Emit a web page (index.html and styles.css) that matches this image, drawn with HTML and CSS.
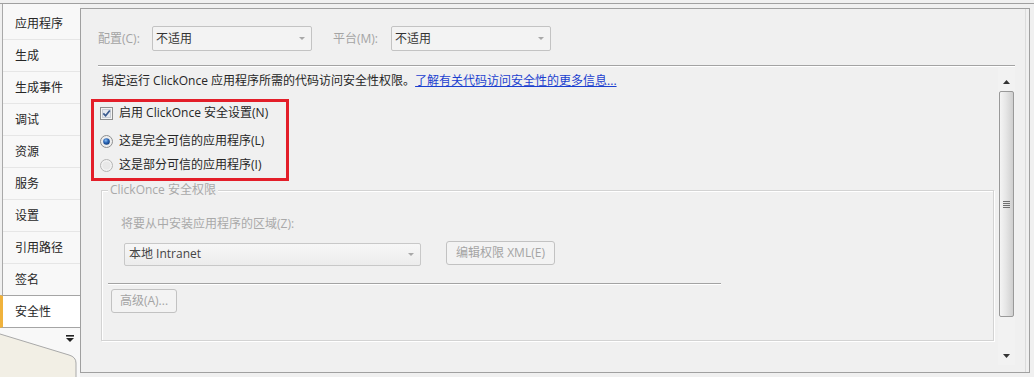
FILE: index.html
```html
<!DOCTYPE html>
<html lang="zh-CN">
<head>
    <meta charset="UTF-8">
    <title>安全性</title>
    <link rel="stylesheet" href="styles.css">
</head>
<body>
    <div class="window">
        <div class="sidebar">
            <ul class="tabs">
                <li class="tab">应用程序</li>
                <li class="tab">生成</li>
                <li class="tab">生成事件</li>
                <li class="tab">调试</li>
                <li class="tab">资源</li>
                <li class="tab">服务</li>
                <li class="tab">设置</li>
                <li class="tab">引用路径</li>
                <li class="tab">签名</li>
                <li class="tab active">安全性</li>
            </ul>
            <div class="sidebar-foot">
                <svg width="80" height="49" viewBox="0 0 80 49">
                    <path d="M0 0 H80 V49 H0 Z" fill="#f0f0f0"/>
                    <path d="M3 0 H80 V49 H76 V35 Q76 29 69 27 L0 6 V0 Z" fill="#f8f8f8"/>
                    <path d="M0 6 L69 27 Q76 29 76 35 V49 H0 Z" fill="#f2efe5"/>
                    <path d="M0 6 L69 27 Q76 29 76 35 V49" fill="none" stroke="#a9a9a9" stroke-width="1"/>
                    <rect x="66" y="7" width="8" height="1.6" fill="#222"/>
                    <path d="M66 10 H74 L70 14 Z" fill="#222"/>
                </svg>
            </div>
        </div>

        <div class="panel">
            <div class="config-row">
                <span class="muted config">配置(C):</span>
                <div class="combo small"><span>不适用</span><i class="caret"></i></div>
                <span class="muted platform">平台(M):</span>
                <div class="combo small"><span>不适用</span><i class="caret"></i></div>
            </div>
            <div class="rule"></div>

            <div class="scroll-area">
                <div class="scroll-content">
                    <p class="intro">指定运行 ClickOnce 应用程序所需的代码访问安全性权限。<a href="#">了解有关代码访问安全性的更多信息...</a></p>

                    <div class="highlight">
                        <label class="option first">
                            <svg class="mark" width="13" height="13" viewBox="0 0 13 13">
                                <rect x="0.5" y="0.5" width="12" height="12" fill="#f4f4f4" stroke="#8e8f8f"/>
                                <rect x="2.5" y="2.5" width="8" height="8" fill="#e6e9ef" stroke="#c9ced6"/>
                                <path d="M3.3 6.4 L5.6 8.8 L9.8 3.4" fill="none" stroke="#3a5a8e" stroke-width="1.7"/>
                            </svg>
                            启用 ClickOnce 安全设置(N)
                        </label>
                        <label class="option second">
                            <svg class="mark" width="13" height="13" viewBox="0 0 13 13">
                                <defs>
                                    <radialGradient id="dot" cx="0.4" cy="0.35" r="0.7">
                                        <stop offset="0" stop-color="#8cc0f2"/>
                                        <stop offset="0.5" stop-color="#2a65b6"/>
                                        <stop offset="1" stop-color="#133b74"/>
                                    </radialGradient>
                                </defs>
                                <circle cx="6.5" cy="6.5" r="6" fill="#eeeeee" stroke="#8e8f8f"/>
                                <circle cx="6.5" cy="6.5" r="3.3" fill="url(#dot)"/>
                            </svg>
                            这是完全可信的应用程序(L)
                        </label>
                        <label class="option third">
                            <svg class="mark" width="13" height="13" viewBox="0 0 13 13">
                                <circle cx="6.5" cy="6.5" r="6" fill="#f2f2f2" stroke="#b4b4b4"/>
                                <circle cx="6.5" cy="6.5" r="4" fill="#e8e8e8"/>
                            </svg>
                            这是部分可信的应用程序(I)
                        </label>
                    </div>

                    <div class="group">
                        <span class="group-title">ClickOnce 安全权限</span>
                        <p class="zone-label">将要从中安装应用程序的区域(Z):</p>
                        <div class="zone-row">
                            <div class="combo zone"><span>本地 Intranet</span><i class="caret"></i></div>
                            <button class="btn xml-btn">编辑权限 XML(E)</button>
                        </div>
                        <div class="rule inner-rule"></div>
                        <button class="btn adv-btn">高级(A)...</button>
                    </div>
                </div>

                <div class="scrollbar">
                    <div class="sb-btn">
                        <svg width="7" height="4" viewBox="0 0 7 4"><path d="M0 4 L3.5 0 L7 4 Z" fill="#333"/></svg>
                    </div>
                    <div class="sb-thumb">
                        <span></span><span></span><span></span><span></span>
                    </div>
                    <div class="sb-track"></div>
                    <div class="sb-btn">
                        <svg width="7" height="4" viewBox="0 0 7 4"><path d="M0 0 L7 0 L3.5 4 Z" fill="#333"/></svg>
                    </div>
                </div>
            </div>
        </div>
    </div>
</body>
</html>
```

FILE: styles.css
```css
* {
    margin: 0;
    padding: 0;
    box-sizing: border-box;
}

body {
    width: 1034px;
    height: 377px;
    overflow: hidden;
    background: #f0f0f0;
    font-family: "Open Sans", "Noto Sans CJK SC", sans-serif;
    font-size: 12px;
    line-height: 16px;
    color: #262626;
}

.window {
    margin-top: 3px;
    height: 374px;
    border-top: 1px solid #a0a0a0;
    display: flex;
}

/* левая колонка вкладок */
.sidebar {
    width: 80px;
    display: flex;
    flex-direction: column;
}

.tabs {
    list-style: none;
    margin-left: 2px;
    padding-top: 4px;
    border-left: 1px solid #a9a9a9;
    background: #f8f8f8;
}

.tab {
    height: 32px;
    line-height: 31px;
    padding-left: 12px;
    border-bottom: 1px solid #e6e6e6;
}

.tab.active {
    margin-top: -1px;
    margin-left: -3px;
    height: 33px;
    border-left: 3px solid #f0b23c;
    border-top: 1px solid #a5a5a5;
    border-bottom: 1px solid #a5a5a5;
    background: #ffffff;
}

.sidebar-foot {
    flex: 1;
    overflow: hidden;
}

.sidebar-foot svg {
    display: block;
}

/* основная панель */
.panel {
    flex: 1;
    margin: 4px 4px 4px 0;
    border: 1px solid #a0a0a0;
    box-shadow: inset -3px 0 0 #f0f0f0, inset -4px 0 0 #dcdcdc;
    padding: 17px 14px 7px 17px;
    display: flex;
    flex-direction: column;
}

.config-row {
    height: 25px;
    display: flex;
    align-items: center;
}

.muted {
    color: #a4a4a4;
}

.config {
    width: 54px;
}

.platform {
    margin-left: 21px;
    width: 58px;
}

.combo {
    height: 25px;
    border: 1px solid #c3c3c3;
    border-radius: 2px;
    background: #f3f3f3;
    padding-left: 3px;
    display: flex;
    align-items: center;
    justify-content: space-between;
    color: #333;
}

.combo.small {
    width: 160px;
}

.caret {
    width: 0;
    height: 0;
    margin-right: 6px;
    border-left: 3px solid transparent;
    border-right: 3px solid transparent;
    border-top: 3px solid #a8a8a8;
}

.rule {
    margin-top: 14px;
    border-top: 1px solid #a3a3a3;
    border-bottom: 1px solid #ffffff;
}

.scroll-area {
    flex: 1;
    margin-top: 1px;
    display: flex;
}

.scroll-content {
    flex: 1;
    padding: 5px 0 0 4px;
}

.intro a {
    color: #1b3fcf;
    text-decoration: underline;
}

/* красная рамка выделения */
.highlight {
    margin: 10px 0 0 -11px;
    width: 198px;
    height: 82px;
    border: 3px solid #e31e29;
    padding: 1px 0 0 6px;
}

.option {
    height: 20px;
    display: flex;
    align-items: center;
    gap: 6px;
}

.option.second {
    margin-top: 8px;
}

.option.third {
    margin-top: 4px;
}

.mark {
    flex-shrink: 0;
}

/* группа ClickOnce */
.group {
    margin: 9px 4px 0 -1px;
    height: 151px;
    border: 1px solid #d3d3d3;
    box-shadow: inset 1px 1px 0 #ffffff, 1px 1px 0 #ffffff;
    padding-left: 19px;
}

.group-title {
    display: block;
    width: max-content;
    margin: -9px 0 0 -13px;
    padding: 0 2px;
    background: #f0f0f0;
    color: #a9a9a9;
}

.zone-label {
    margin-top: 18px;
    color: #a9a9a9;
}

.zone-row {
    margin-top: 9px;
    height: 24px;
    display: flex;
    align-items: center;
}

.combo.zone {
    width: 297px;
    height: 23px;
    margin-top: 2px;
    margin-left: 3px;
    padding-left: 4px;
    background: linear-gradient(#f7f7f7, #ececec);
    border-color: #c8c8c8;
    color: #444;
}

.btn {
    font: inherit;
    color: #a4a4a4;
    background: #f3f3f3;
    border: 1px solid #c2c2c2;
    border-radius: 3px;
    height: 24px;
}

.xml-btn {
    margin-left: 25px;
    width: 109px;
}

.inner-rule {
    margin: 18px 0 0 -13px;
    width: 613px;
}

.adv-btn {
    margin: 4px 0 0 -10px;
    width: 66px;
}

/* полоса прокрутки */
.scrollbar {
    width: 17px;
    padding-top: 4px;
    display: flex;
    flex-direction: column;
    background: #f2f2f2;
}

.sb-btn {
    height: 19px;
    display: flex;
    align-items: center;
    justify-content: center;
}

.sb-thumb {
    height: 226px;
    margin: 0 1px;
    border: 1px solid #999999;
    border-radius: 2px;
    background: linear-gradient(to right, #f4f4f4, #e6e6e6 45%, #cfcfcf);
    display: flex;
    flex-direction: column;
    align-items: center;
    justify-content: center;
    gap: 1px;
}

.sb-thumb span {
    width: 7px;
    height: 1px;
    background: #6e6e6e;
}

.sb-track {
    flex: 1;
}
```
